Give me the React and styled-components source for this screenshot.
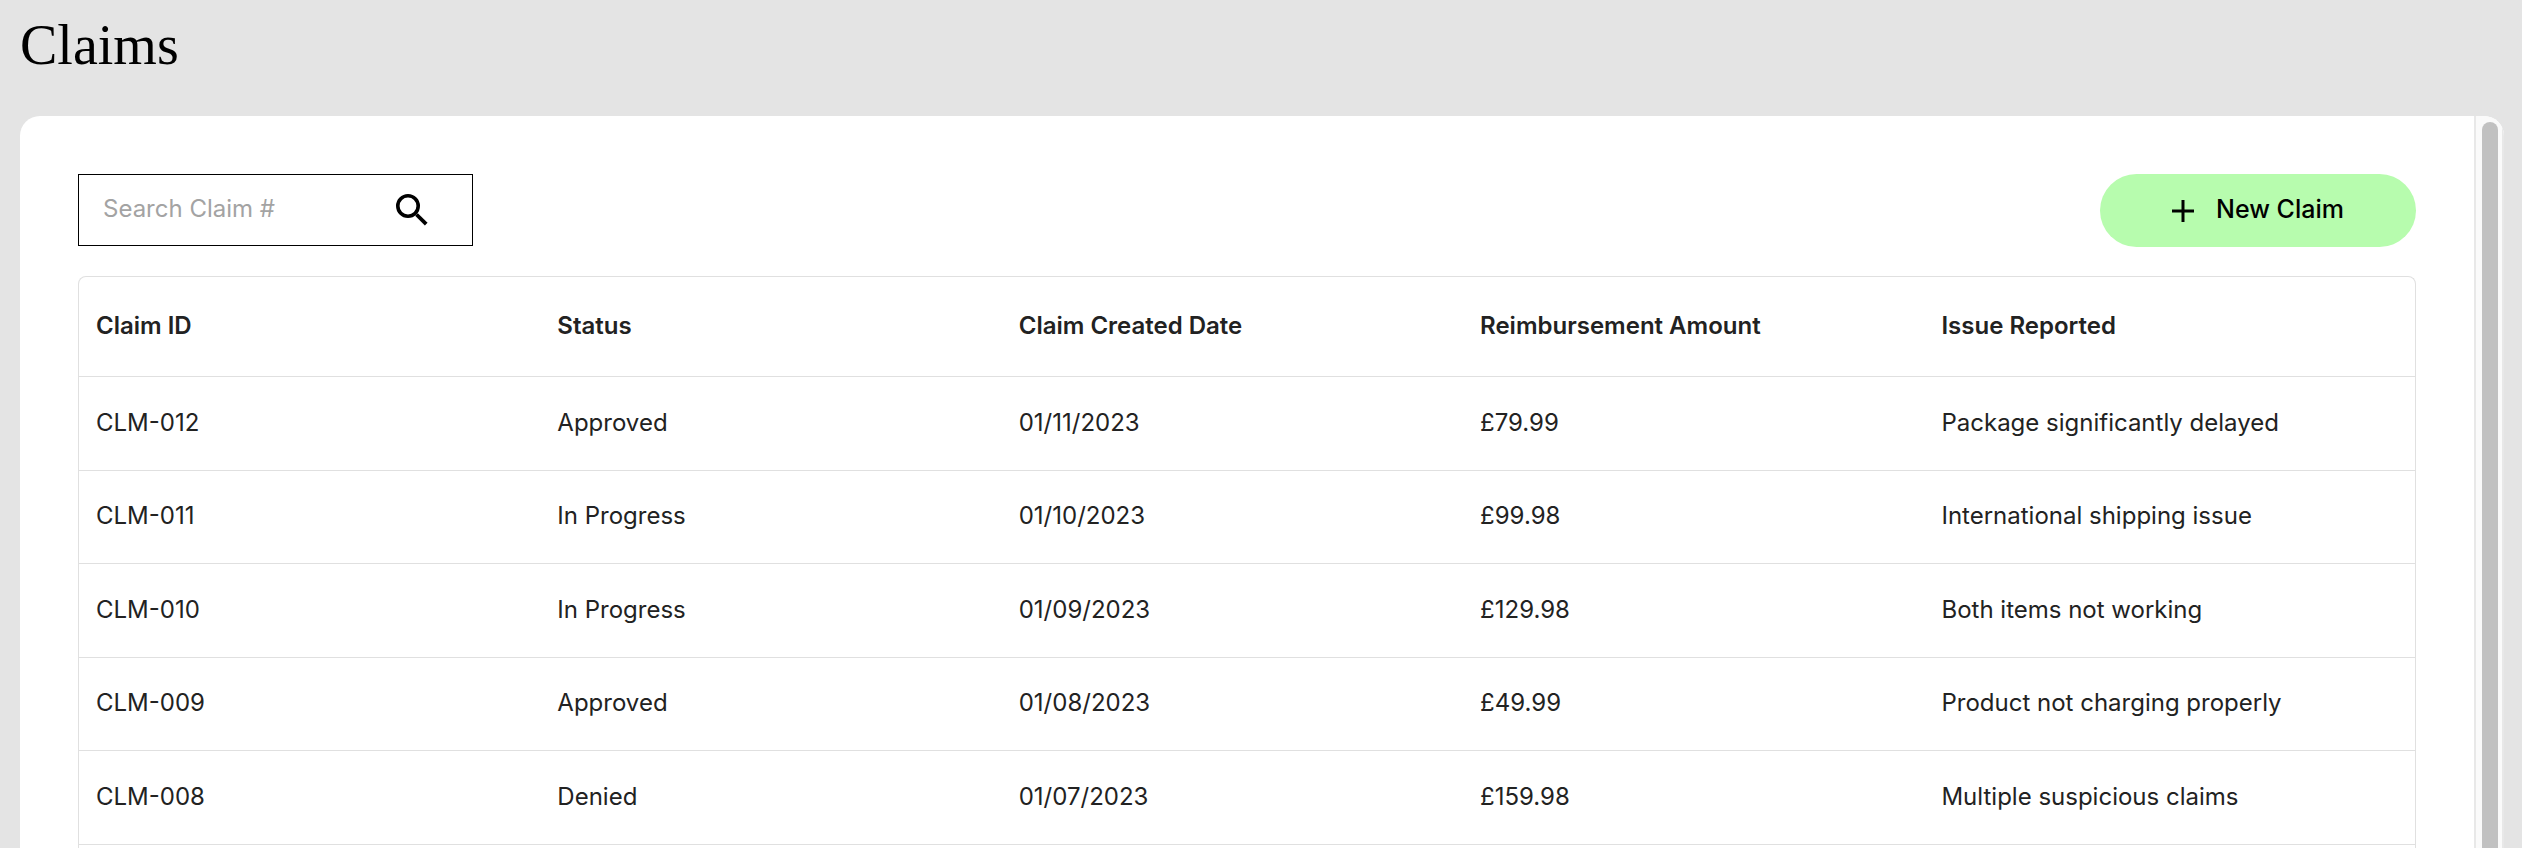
import React, { useState } from 'react';
import styled, { createGlobalStyle } from 'styled-components';

const columns = ['Claim ID', 'Status', 'Claim Created Date', 'Reimbursement Amount', 'Issue Reported'];

const claims = [
  { id: 'CLM-012', status: 'Approved', created: '01/11/2023', amount: '£79.99', issue: 'Package significantly delayed' },
  { id: 'CLM-011', status: 'In Progress', created: '01/10/2023', amount: '£99.98', issue: 'International shipping issue' },
  { id: 'CLM-010', status: 'In Progress', created: '01/09/2023', amount: '£129.98', issue: 'Both items not working' },
  { id: 'CLM-009', status: 'Approved', created: '01/08/2023', amount: '£49.99', issue: 'Product not charging properly' },
  { id: 'CLM-008', status: 'Denied', created: '01/07/2023', amount: '£159.98', issue: 'Multiple suspicious claims' },
];

const SearchIcon = () => (
  <svg width="32" height="32" viewBox="0 0 32 32" fill="none" stroke="currentColor" aria-hidden="true">
    <circle cx="12" cy="12" r="10.2" strokeWidth="3.6" />
    <path d="M20.5 20.5L30.2 30.2" strokeWidth="3.8" />
  </svg>
);

const PlusIcon = () => (
  <svg width="22" height="22" viewBox="0 0 22 22" fill="none" stroke="currentColor" strokeWidth="3" aria-hidden="true">
    <path d="M11 0V22M0 11H22" />
  </svg>
);

const App = () => {
  const [search, setSearch] = useState('');
  const rows = claims.filter((claim) => claim.id.toLowerCase().includes(search.toLowerCase()));

  return (
    <Page>
      <GlobalStyle />
      <Title>Claims</Title>
      <Panel>
        <Content>
          <Toolbar>
            <SearchBox>
              <SearchInput
                type="text"
                aria-label="Search Claim #"
                placeholder="Search Claim #"
                value={search}
                onChange={(ev) => setSearch(ev.target.value)}
              />
              <SearchButton type="button" aria-label="Search">
                <SearchIcon />
              </SearchButton>
            </SearchBox>
            <NewClaimButton type="button">
              <PlusIcon />
              <ButtonLabel>New Claim</ButtonLabel>
            </NewClaimButton>
          </Toolbar>
          <TableFrame>
            <Table>
              <thead>
                <tr>
                  {columns.map((name) => (
                    <HeadCell key={name} scope="col">{name}</HeadCell>
                  ))}
                </tr>
              </thead>
              <tbody>
                {rows.map((claim) => (
                  <Row key={claim.id}>
                    <Cell>{claim.id}</Cell>
                    <Cell>{claim.status}</Cell>
                    <Cell>{claim.created}</Cell>
                    <Cell>{claim.amount}</Cell>
                    <Cell>{claim.issue}</Cell>
                  </Row>
                ))}
              </tbody>
            </Table>
          </TableFrame>
        </Content>
        <ScrollTrack>
          <ScrollThumb />
        </ScrollTrack>
      </Panel>
    </Page>
  );
};

const GlobalStyle = createGlobalStyle`
  * {
    box-sizing: border-box;
  }

  body {
    margin: 0;
    background: #e4e4e4;
    font-family: Inter, 'Liberation Sans', sans-serif;
  }
`;

const Page = styled.div`
  display: flex;
  flex-direction: column;
  height: 100vh;
  padding: 0 18px 0 20px;
  overflow: hidden;
`;

const Title = styled.h1`
  margin: 0;
  padding: 5px 0 31px;
  font-family: 'Liberation Serif', serif;
  font-size: 56px;
  font-weight: 400;
  line-height: 80px;
  color: #000;
`;

const Panel = styled.main`
  display: flex;
  flex: 1;
  min-height: 0;
  border-radius: 20px 20px 0 0;
  background: #fff;
  overflow: hidden;
`;

const Content = styled.div`
  display: flex;
  flex: 1;
  flex-direction: column;
  padding: 58px 58px 0;
`;

const Toolbar = styled.div`
  display: flex;
  align-items: flex-start;
  justify-content: space-between;
  margin-bottom: 29px;
`;

const SearchBox = styled.div`
  display: flex;
  align-items: center;
  width: 395px;
  height: 72px;
  padding: 0 44px 0 24px;
  border: 1px solid #000;
`;

const SearchInput = styled.input`
  flex: 1;
  min-width: 0;
  padding: 0 0 3px;
  border: 0;
  outline: 0;
  background: none;
  font-family: inherit;
  font-size: 24px;
  line-height: 32px;

  &::placeholder {
    color: #a3a3a3;
  }
`;

const SearchButton = styled.button`
  display: flex;
  padding: 0;
  border: 0;
  background: none;
  color: #000;
`;

const NewClaimButton = styled.button`
  display: flex;
  align-items: center;
  justify-content: center;
  gap: 22px;
  width: 316px;
  height: 73px;
  padding: 0;
  border: 0;
  border-radius: 37px;
  background: #b7fcae;
  color: #000;
  font-family: inherit;
  font-size: 25px;
  font-weight: 500;
  line-height: 32px;
`;

const ButtonLabel = styled.span`
  padding-bottom: 3px;
`;

const TableFrame = styled.div`
  flex: 1;
  border: 1px solid #e0e0e0;
  border-bottom: 0;
  border-radius: 8px 8px 0 0;
`;

const Table = styled.table`
  width: 100%;
  border-collapse: separate;
  border-spacing: 0;
  table-layout: fixed;
  color: #222;
  font-size: 24px;
  line-height: 32px;
`;

const Cell = styled.td`
  padding: 0 17px 2px;
  border-bottom: 1px solid #e0e0e0;
  text-align: left;
`;

const HeadCell = styled(Cell).attrs({ as: 'th' })`
  width: 19.75%;
  height: 100px;
  font-weight: 600;

  &:last-child {
    width: auto;
  }
`;

const Row = styled.tr`
  height: 94px;

  &:nth-child(even) {
    height: 93px;
  }
`;

const ScrollTrack = styled.div`
  width: 30px;
  padding: 6px 4px 0 6px;
  border: solid #e8e8e8;
  border-width: 0 2px;
  background: #fafafa;
`;

const ScrollThumb = styled.div`
  width: 16px;
  height: 100%;
  border-radius: 8px 8px 0 0;
  background: #c1c1c1;
`;

export default App;
